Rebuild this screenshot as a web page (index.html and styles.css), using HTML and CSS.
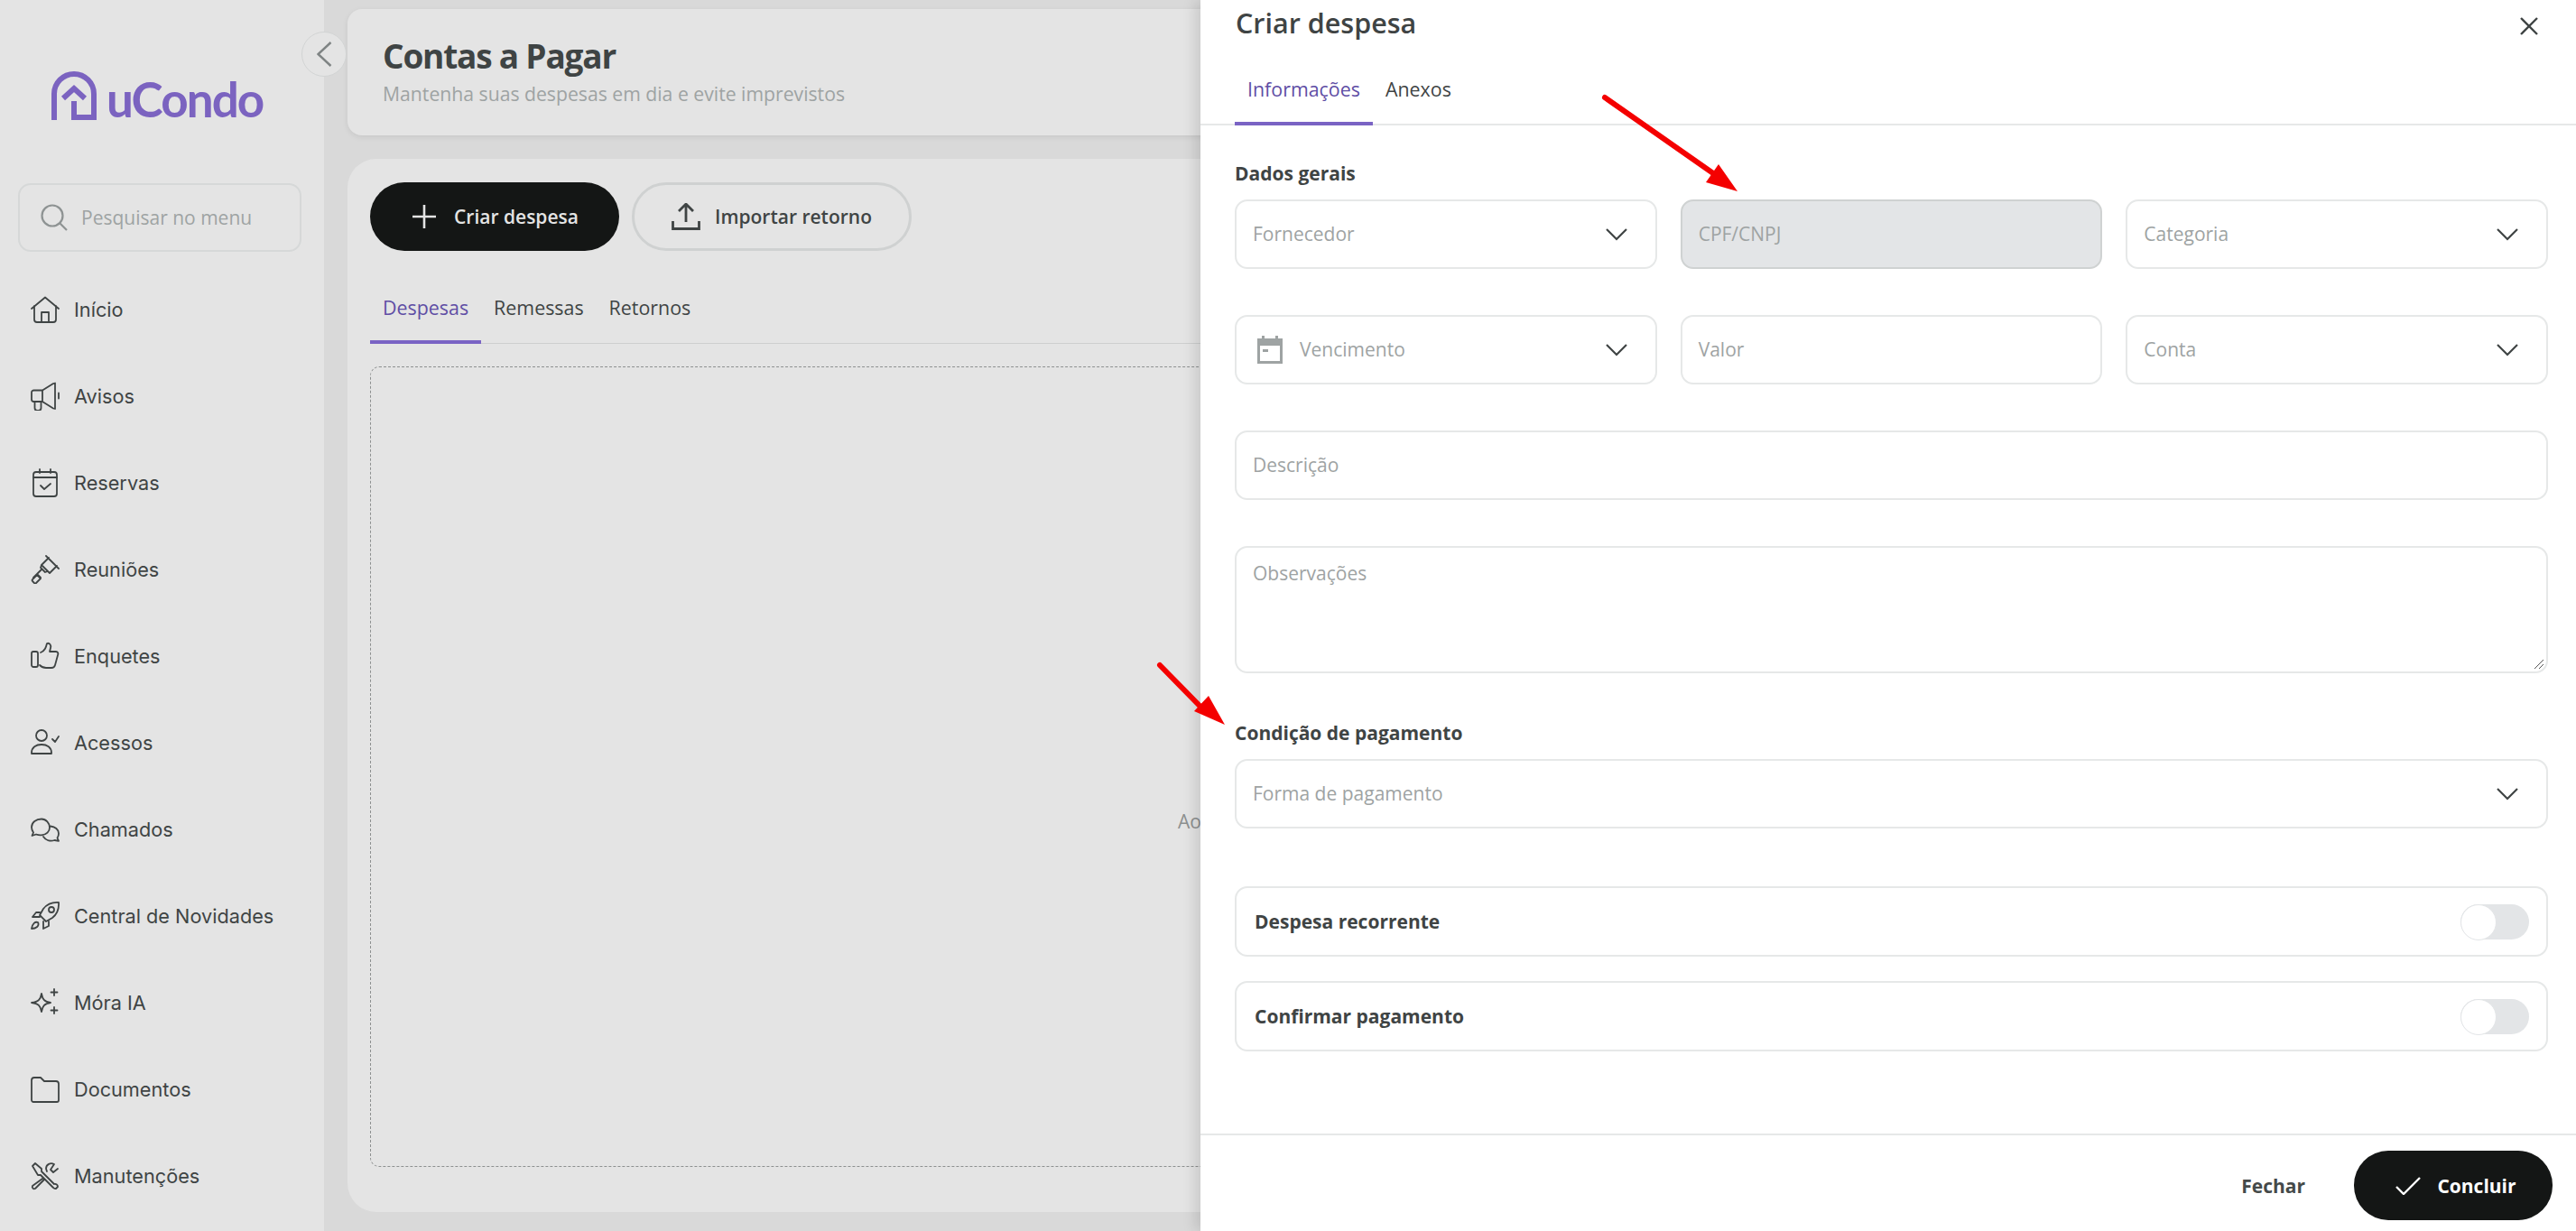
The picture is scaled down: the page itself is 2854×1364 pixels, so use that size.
FILE: index.html
```html
<!DOCTYPE html>
<html lang="pt-BR">
<head>
  <meta charset="UTF-8" />
  <meta name="viewport" content="width=device-width, initial-scale=1" />
  <title>Contas a Pagar - uCondo</title>
  <link rel="stylesheet" href="styles.css">
</head>
<body>

<div class="app">

  <aside class="sidebar">
    <div class="logo">
      <svg class="logo-mark" viewBox="0 0 50 54" fill="none" stroke="#7b63c0" stroke-width="6">
        <path d="M3 54V25a22 22 0 0 1 44 0v29"/>
        <path d="M22 51h25M25 54V33"/>
        <path d="M13 30l12-11 12 11"/>
      </svg>
      <span class="logo-text">uCondo</span>
    </div>

    <div class="menu-search">
      <svg class="search-icon" viewBox="0 0 32 32" fill="none" stroke="#8e9393" stroke-width="2.200">
        <circle cx="14" cy="14" r="11.500"/>
        <path d="M22.500 22.500L30 30"/>
      </svg>
      <span>Pesquisar no menu</span>
    </div>

    <nav class="menu">
      <a><svg viewBox="0 0 32 32"><path d="M1 15L16 2.500 31 15M4 12v15a3 3 0 0 0 3 3h18a3 3 0 0 0 3-3V12M12 30V19h8v11"/></svg>Início</a>
      <a><svg viewBox="0 0 32 32"><path d="M3.500 9.500H13V22H3.500A2.500 2.500 0 0 1 1 19.500V12a2.500 2.500 0 0 1 2.500-2.500zM13 9.500l12-7.500 2-.5V30l-2-.5L13 22M4.500 22v7a3 3 0 0 0 3 3h1a3 3 0 0 0 3-3v-7M31 12.500v6"/></svg>Avisos</a>
      <a><svg viewBox="0 0 32 32"><rect x="3" y="4" width="26" height="27" rx="3"/><path d="M3 10h26M10 1v4M22 1v4M11 19l4 4 7-6"/></svg>Reservas</a>
      <a><svg viewBox="0 0 32 32"><path d="M17 1l14 14M20 3L12 11l9 9 8-8M12 11l-1 3 5 5 3-1M12 16L3 25M7 21l4 4M2 27l5-5 4 4-5 5a1.500 1.500 0 0 1-2 0l-2-2a1.500 1.500 0 0 1 0-2z"/></svg>Reuniões</a>
      <a><svg viewBox="0 0 32 32"><rect x="1" y="11" width="7" height="17" rx="2"/><path d="M11 12c5-2 6-6 7-10 3-1 5 2 4 5l-1 4h7c2 0 3 2 2 4l-3 11c-.5 2-2 3-4 3h-6c-3 0-5-1-7-3"/></svg>Enquetes</a>
      <a><svg viewBox="0 0 32 32"><circle cx="12" cy="8" r="6"/><path d="M1 27c0-6 5-9 11-9s11 3 11 9v1H1zM24 12l3 3 4-6"/></svg>Acessos</a>
      <a><svg viewBox="0 0 32 32"><path d="M12 4.500c-6 0-11 3.500-11 9 0 2.500 1 4.500 2 6l-1.500 3.500 4.500-1.500c2 .7 4 1 6 .8 5.500-.5 9-4 9-8.300 0-5-4-9.500-9-9.500zM22 12.500c5 .5 9 3.500 9 8 0 2-.5 3.500-1.500 5l1.500 3.300-4.500-.8c-5 1.500-10 0-12.500-4"/></svg>Chamados</a>
      <a><svg viewBox="0 0 32 32"><path d="M31 1c-7-.5-13 2-17 7l-4 7 7 7 7-4c5-4 7.500-10 7-17zM10 12H6l-4 5h8M20 22v5l-6 3v-8"/><circle cx="23" cy="9" r="3"/><path d="M8 23c-3-1-6 1-7 7 5 0 9-3 7-7z"/></svg>Central de Novidades</a>
      <a><svg viewBox="0 0 32 32"><path d="M12 6c1 6 3 9 10 10-7 1-9 4-10 10-1-6-3-9-11-10 8-1 10-4 11-10zM26 1v7M22.500 4.500h7M26 21v7M22.500 24.500h7"/></svg>Móra IA</a>
      <a><svg viewBox="0 0 32 32"><path d="M1 6a3 3 0 0 1 3-3h7l4 4h13a3 3 0 0 1 3 3v18a2 2 0 0 1-2 2H3a2 2 0 0 1-2-2z"/></svg>Documentos</a>
      <a><svg viewBox="0 0 32 32"><path d="M2 5l3-3 7 6v3l14 14a3 3 0 0 1 4 3l-2 2a3 3 0 0 1-3-1L11 15H8zM30 8l-5 4-3-3 4-6c-4-2-9 0-9 5l1 3M13 19L2 27c-1 2 1 4 3 3l10-10"/></svg>Manutenções</a>
    </nav>

    <button class="collapse-btn">
      <svg viewBox="0 0 17 28" fill="none" stroke="#7f8484" stroke-width="2.400"><path d="M15.500 1L1.500 14l14 13"/></svg>
    </button>
  </aside>

  <main class="content">
    <section class="page-head">
      <h1>Contas a Pagar</h1>
      <p>Mantenha suas despesas em dia e evite imprevistos</p>
    </section>

    <section class="panel">
      <div class="actions">
        <button class="btn btn-dark">
          <svg viewBox="0 0 26 26" fill="none" stroke="#e4e4e4" stroke-width="2.600"><path d="M13 0v26M0 13h26"/></svg>
          Criar despesa
        </button>
        <button class="btn btn-outline">
          <svg class="upload" viewBox="0 0 32 30" fill="none" stroke="#3f4444" stroke-width="2.800"><path d="M16 21V2M8 9l8-8 8 8M1.500 20v8.500h29V20"/></svg>
          Importar retorno
        </button>
      </div>
      <div class="tabs panel-tabs">
        <a class="tab active">Despesas</a>
        <a class="tab">Remessas</a>
        <a class="tab">Retornos</a>
      </div>
      <div class="empty-box"><span>Ao</span></div>
    </section>
  </main>

</div>

<aside class="drawer">
  <header class="drawer-head">
    <h2>Criar despesa</h2>
    <svg class="close" viewBox="0 0 20 20" fill="none" stroke="#3f4444" stroke-width="2.400"><path d="M1 1l18 18M19 1L1 19"/></svg>
  </header>

  <div class="tabs drawer-tabs">
    <a class="tab active">Informações</a>
    <a class="tab">Anexos</a>
  </div>

  <div class="drawer-body">
    <h3 class="group-title">Dados gerais</h3>
    <div class="form-grid">
      <div class="field">
        <span>Fornecedor</span>
        <svg class="chev" viewBox="0 0 24 14"><path d="M1 1l11 11L23 1"/></svg>
      </div>
      <div class="field disabled"><span>CPF/CNPJ</span></div>
      <div class="field">
        <span>Categoria</span>
        <svg class="chev" viewBox="0 0 24 14"><path d="M1 1l11 11L23 1"/></svg>
      </div>

      <div class="field">
        <svg class="cal" viewBox="0 0 28 31" fill="#9ea3a3"><path d="M5 0h3v3h12V0h3v3h5v28H0V3h5zM3 11v17h22V11zM6 15h6v3H6z" fill-rule="evenodd"/></svg>
        <span>Vencimento</span>
        <svg class="chev" viewBox="0 0 24 14"><path d="M1 1l11 11L23 1"/></svg>
      </div>
      <div class="field"><span>Valor</span></div>
      <div class="field">
        <span>Conta</span>
        <svg class="chev" viewBox="0 0 24 14"><path d="M1 1l11 11L23 1"/></svg>
      </div>

      <div class="field wide"><span>Descrição</span></div>
      <div class="field wide textarea">
        <span>Observações</span>
        <svg class="grip" viewBox="0 0 12 12" fill="none" stroke="#555" stroke-width="1"><path d="M1 11L11 1M6 11l5-5"/></svg>
      </div>
    </div>

    <h3 class="group-title pay-title">Condição de pagamento</h3>
    <div class="field">
      <span>Forma de pagamento</span>
      <svg class="chev" viewBox="0 0 24 14"><path d="M1 1l11 11L23 1"/></svg>
    </div>

    <div class="switch-list">
      <div class="switch-row">
        <strong>Despesa recorrente</strong>
        <span class="switch"></span>
      </div>
      <div class="switch-row">
        <strong>Confirmar pagamento</strong>
        <span class="switch"></span>
      </div>
    </div>
  </div>

  <footer class="drawer-foot">
    <a class="link-btn">Fechar</a>
    <button class="btn btn-dark btn-done">
      <svg viewBox="0 0 28 20" fill="none" stroke="#fff" stroke-width="2.400"><path d="M1 11l8 8L27 1"/></svg>
      Concluir
    </button>
  </footer>
</aside>

<!-- red annotation arrows -->
<svg class="annot" viewBox="0 0 2854 1364">
  <path d="M1778 108L1898 192M1285 737L1332 785" stroke="#f40000" stroke-width="6" stroke-linecap="round" fill="none"/>
  <path d="M1925 212L1890 202 1904 182zM1357 803L1323 788 1339 771z" fill="#f40000"/>
</svg>

</body>
</html>
```

FILE: styles.css
```css
:root {
  --bg-page: #d9d9d9;
  --bg-dim: #e4e4e4;
  --text: #3f4444;
  --muted: #9ea3a3;
  --line: #e6e8e8;
  --purple: #7b63c0;
  --black: #141615;
}

* {
  box-sizing: border-box;
}

html,
body {
  margin: 0;
  height: 100%;
  overflow: hidden;
}

body {
  background: var(--bg-page);
  color: var(--text);
  font-family: "Open Sans", "Noto Sans", sans-serif;
}

h1,
h2,
h3,
p {
  margin: 0;
}

.app {
  display: flex;
  height: 1364px;
}

/* sidebar */

.sidebar {
  position: relative;
  flex: 0 0 359px;
  background: var(--bg-dim);
  padding: 78px 25px 0 20px;
}

.logo {
  display: flex;
  align-items: flex-end;
  gap: 11px;
  height: 55px;
  padding-left: 37px;
}

.logo-mark {
  width: 50px;
  height: 54px;
}

.logo-text {
  color: var(--purple);
  font-family: Lato, sans-serif;
  font-size: 53px;
  font-weight: 700;
  line-height: 46px;
  letter-spacing: -1.900px;
}

.menu-search {
  display: flex;
  align-items: center;
  gap: 14px;
  height: 76px;
  margin-top: 70px;
  padding-left: 22px;
  border: 2px solid #d6d8d8;
  border-radius: 14px;
  color: var(--muted);
  font-size: 21px;
}

.search-icon {
  width: 32px;
  height: 32px;
}

.menu {
  display: flex;
  flex-direction: column;
  margin-top: 16px;
  margin-left: 14px;
}

.menu a {
  display: flex;
  align-items: center;
  gap: 16px;
  height: 96px;
  color: var(--text);
  font-family: Inter, sans-serif;
  font-size: 21.700px;
  white-space: nowrap;
}

.menu svg {
  flex: 0 0 32px;
  width: 32px;
  height: 32px;
  fill: none;
  stroke: var(--text);
  stroke-width: 1.800;
  stroke-linejoin: round;
  stroke-linecap: round;
}

.collapse-btn {
  position: absolute;
  top: 35px;
  right: -25px;
  z-index: 2;
  display: flex;
  align-items: center;
  justify-content: center;
  width: 50px;
  height: 50px;
  padding: 0;
  background: var(--bg-dim);
  border: 1px solid #d2d4d4;
  border-radius: 50%;
}

.collapse-btn svg {
  width: 17px;
  height: 28px;
}

/* main */

.content {
  flex: 1;
  display: flex;
  flex-direction: column;
  gap: 26px;
  padding: 10px 24px 21px 26px;
  min-width: 0;
}

.page-head {
  height: 140px;
  padding: 26px 39px 0;
  background: var(--bg-dim);
  border-radius: 16px;
  box-shadow: 0 2px 6px rgba(0, 0, 0, 0.08);
}

.page-head h1 {
  font-size: 37px;
  font-weight: 700;
  line-height: 52px;
  letter-spacing: -1.200px;
}

.page-head p {
  margin-top: 1px;
  color: var(--muted);
  font-size: 21.200px;
  line-height: 30px;
}

.panel {
  flex: 1;
  display: flex;
  flex-direction: column;
  padding: 26px 25px 50px 25px;
  background: var(--bg-dim);
  border-radius: 32px;
}

.actions {
  display: flex;
  gap: 14px;
}

.btn {
  display: inline-flex;
  align-items: center;
  justify-content: center;
  height: 76px;
  padding: 0;
  border-radius: 38px;
  font-family: inherit;
  font-size: 21px;
  font-weight: 600;
}

.btn svg {
  width: 26px;
  height: 26px;
}

.btn-dark {
  gap: 20px;
  width: 276px;
  padding-left: 2px;
  background: var(--black);
  border: 0;
  color: #e4e4e4;
}

.btn-outline {
  gap: 16px;
  width: 310px;
  background: transparent;
  border: 3px solid #cfd1d1;
  color: var(--text);
}

.btn-outline .upload {
  width: 32px;
  height: 30px;
}

.tabs {
  display: flex;
}

.tab {
  display: flex;
  align-items: center;
  padding: 0 14px;
  color: var(--text);
  font-size: 21.400px;
  border-bottom: 4px solid transparent;
}

.tab.active {
  color: #5f4ea5;
  border-bottom-color: #7a63c4;
}

.panel-tabs {
  height: 78px;
  margin-top: 25px;
  border-bottom: 1px solid #cdcfcf;
}

.panel-tabs .tab {
  margin-bottom: -1px;
}

.empty-box {
  flex: 1;
  display: flex;
  align-items: center;
  margin-top: 25px;
  padding-top: 120px;
  padding-left: 894px;
  border: 1px dashed #8d9090;
  border-radius: 10px;
  color: #8d9090;
  font-size: 21px;
}

/* drawer */

.drawer {
  position: absolute;
  top: 0;
  right: 0;
  bottom: 0;
  z-index: 5;
  display: flex;
  flex-direction: column;
  width: 1524px;
  background: #fff;
  box-shadow: -6px 0 14px rgba(0, 0, 0, 0.12);
}

.drawer-head {
  display: flex;
  align-items: center;
  justify-content: space-between;
  height: 50px;
  padding: 0 42px 0 39px;
}

.drawer-head h2 {
  font-size: 30.500px;
  font-weight: 600;
  line-height: 50px;
}

.close {
  width: 20px;
  height: 20px;
  margin-top: 8px;
}

.drawer-tabs {
  height: 89px;
  padding-left: 38px;
  border-bottom: 2px solid var(--line);
}

.drawer-tabs .tab {
  margin-bottom: -2px;
  padding: 12px 14px 0;
}

.drawer-body {
  flex: 1;
  padding: 38px 31px 0 38px;
}

.group-title {
  font-size: 21px;
  font-weight: 700;
  line-height: 30px;
}

.form-grid {
  display: grid;
  grid-template-columns: repeat(3, 1fr);
  gap: 51px 26px;
  margin-top: 14px;
}

.field {
  display: flex;
  align-items: center;
  gap: 12px;
  height: 77px;
  padding: 0 31px 0 18px;
  border: 2px solid var(--line);
  border-radius: 14px;
  color: var(--muted);
  font-size: 21px;
}

.field span {
  flex: 1;
  padding-bottom: 2px;
}

.field.disabled {
  background: #e3e5e7;
  border-color: #cfd2d2;
}

.field.wide {
  grid-column: 1 / -1;
}

.field.textarea {
  position: relative;
  align-items: flex-start;
  height: 141px;
  padding-top: 14px;
}

.grip {
  position: absolute;
  right: 2px;
  bottom: 2px;
  width: 12px;
  height: 12px;
}

.chev {
  flex: 0 0 24px;
  width: 24px;
  height: 14px;
  fill: none;
  stroke: var(--text);
  stroke-width: 2.200;
}

.cal {
  width: 28px;
  height: 31px;
  margin: 0 7px 0 5px;
}

.pay-title {
  margin-top: 51px;
  margin-bottom: 14px;
}

.switch-list {
  display: flex;
  flex-direction: column;
  gap: 27px;
  margin-top: 64px;
}

.switch-row {
  display: flex;
  align-items: center;
  justify-content: space-between;
  height: 78px;
  padding: 0 19px 0 20px;
  border: 2px solid var(--line);
  border-radius: 14px;
  font-size: 21px;
}

.switch-row strong {
  font-weight: 700;
}

.switch {
  position: relative;
  width: 76px;
  height: 39px;
  background: #e3e5e7;
  border-radius: 20px;
}

.switch::after {
  content: "";
  position: absolute;
  top: 0;
  left: 0;
  width: 38px;
  height: 38px;
  background: #fff;
  border: 1px solid #e3e5e7;
  border-radius: 50%;
}

.drawer-foot {
  display: flex;
  align-items: center;
  justify-content: flex-end;
  gap: 54px;
  height: 108px;
  padding: 5px 26px 0 0;
  border-top: 2px solid var(--line);
}

.link-btn {
  color: #454a4a;
  font-size: 21px;
  font-weight: 700;
}

.btn-done {
  gap: 18px;
  width: 220px;
  height: 77px;
  padding-left: 6px;
  color: #fff;
  font-weight: 700;
}

.btn-done svg {
  width: 28px;
  height: 20px;
}

.annot {
  position: absolute;
  top: 0;
  left: 0;
  z-index: 9;
  width: 2854px;
  height: 1364px;
  pointer-events: none;
}
```
